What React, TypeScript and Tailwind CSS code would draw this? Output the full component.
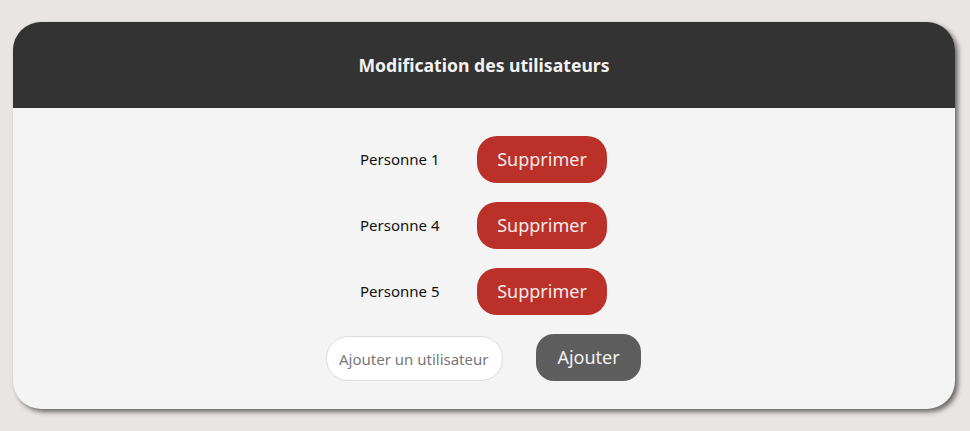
const users = ["Personne 1", "Personne 4", "Personne 5"];

export default function App() {
  return (
    <div
      className="min-h-[431px] w-full bg-[#e9e5e4] pt-[22px] pl-[13px] pr-[15px] pb-[22px]"
      style={{ fontFamily: '"Noto Sans", "Open Sans", sans-serif' }}
    >
      <div className="w-[942px] overflow-hidden rounded-[28px] bg-[#f4f4f4] shadow-[3px_3px_5px_rgba(0,0,0,0.55)]">
        <div className="flex h-[86px] items-center justify-center bg-[#333333]">
          <h1 className="text-[17.6px] font-bold text-[#f2f2f2]">
            Modification des utilisateurs
          </h1>
        </div>
        <div className="flex flex-col items-center gap-[19px] pt-[28px] pb-[28px]">
          {users.map((name) => (
            <div key={name} className="flex items-center gap-[37px] pr-[1px]">
              <span className="w-[80px] text-[15px] text-[#111]">{name}</span>
              <button
                type="button"
                className="h-[47px] w-[130px] rounded-[20px] bg-[#bb3129] text-[18px] text-[#f6ecec]"
              >
                Supprimer
              </button>
            </div>
          ))}
          <div className="flex items-center gap-[33px] pr-[1px]">
            <input
              type="text"
              placeholder="Ajouter un utilisateur"
              className="mt-[2px] h-[45px] w-[177px] rounded-[22px] border border-[#dddddd] bg-white px-3 text-[15px] text-[#333] placeholder:text-[#777]"
            />
            <button
              type="button"
              className="h-[47px] w-[105px] rounded-[18px] bg-[#5d5d5d] text-[18px] text-[#f2f2f2]"
            >
              Ajouter
            </button>
          </div>
        </div>
      </div>
    </div>
  );
}
